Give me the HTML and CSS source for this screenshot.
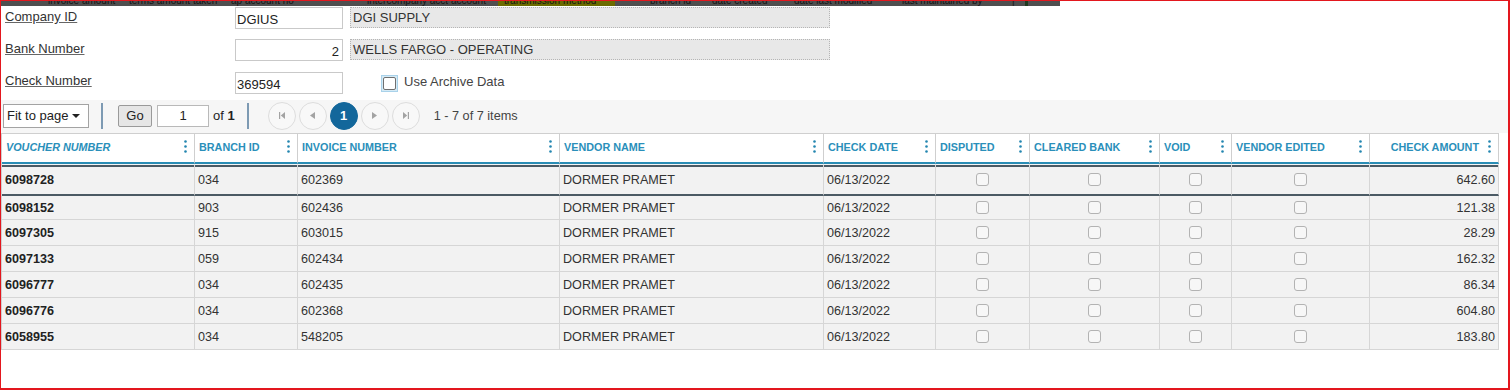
FILE: index.html
```html
<!DOCTYPE html>
<html lang="en">
<head>
<meta charset="utf-8">
<title>Check Inquiry</title>
<link rel="stylesheet" href="styles.css">
</head>
<body>
<div class="frame">
  <div class="band">
    <span class="bt w1">invoice amount</span>
    <span class="bt w2">terms amount taken</span>
    <span class="bt w3">ap account no</span>
    <span class="bt w4">intercompany acct account</span>
    <span class="bt w5 hl">transmission method</span>
    <span class="bt w6">branch id</span>
    <span class="bt w7">date created</span>
    <span class="bt w8">date last modified</span>
    <span class="bt w9">last maintained by</span>
    <span class="bt w10">|</span>
    <span class="bgreen"></span>
  </div>

  <div class="form">
    <div class="frow">
      <span class="flabel">Company ID</span>
      <span class="fin">DGIUS</span>
      <span class="fdesc">DGI SUPPLY</span>
    </div>
    <div class="frow">
      <span class="flabel">Bank Number</span>
      <span class="fin right">2</span>
      <span class="fdesc">WELLS FARGO - OPERATING</span>
    </div>
    <div class="frow third">
      <span class="flabel">Check Number</span>
      <span class="fin">369594</span>
      <span class="acb"><i></i></span>
      <span class="acl">Use Archive Data</span>
    </div>
  </div>

  <div class="pager">
    <span class="sel">Fit to page<span class="caret"></span></span>
    <span class="vsep"></span>
    <span class="go">Go</span>
    <span class="pnum">1</span>
    <span class="of">of <b>1</b></span>
    <span class="vsep vsep2"></span>
    <div class="pbtns">
      <span class="pb"><svg width="6" height="7" viewBox="0 0 6 7"><rect x="0" y="0" width="1.2" height="7" fill="#a3a3a3"/><polygon points="6,0 1.8,3.5 6,7" fill="#a3a3a3"/></svg></span>
      <span class="pb"><svg width="5" height="7" viewBox="0 0 5 7"><polygon points="5,0 0,3.5 5,7" fill="#a3a3a3"/></svg></span>
      <span class="pb cur">1</span>
      <span class="pb"><svg width="5" height="7" viewBox="0 0 5 7"><polygon points="0,0 5,3.5 0,7" fill="#a3a3a3"/></svg></span>
      <span class="pb"><svg width="6" height="7" viewBox="0 0 6 7"><polygon points="0,0 4.2,3.5 0,7" fill="#a3a3a3"/><rect x="4.8" y="0" width="1.2" height="7" fill="#a3a3a3"/></svg></span>
    </div>
    <span class="items">1 - 7 of 7 items</span>
  </div>

  <div class="grid">
    <div class="h sorted"><span>VOUCHER NUMBER</span><svg class="keb" width="3" height="13" viewBox="0 0 3 13"><circle cx="1.5" cy="1.5" r="1.3"/><circle cx="1.5" cy="6.5" r="1.3"/><circle cx="1.5" cy="11.5" r="1.3"/></svg></div>
    <div class="h"><span>BRANCH ID</span><svg class="keb" width="3" height="13" viewBox="0 0 3 13"><circle cx="1.5" cy="1.5" r="1.3"/><circle cx="1.5" cy="6.5" r="1.3"/><circle cx="1.5" cy="11.5" r="1.3"/></svg></div>
    <div class="h"><span>INVOICE NUMBER</span><svg class="keb" width="3" height="13" viewBox="0 0 3 13"><circle cx="1.5" cy="1.5" r="1.3"/><circle cx="1.5" cy="6.5" r="1.3"/><circle cx="1.5" cy="11.5" r="1.3"/></svg></div>
    <div class="h"><span>VENDOR NAME</span><svg class="keb" width="3" height="13" viewBox="0 0 3 13"><circle cx="1.5" cy="1.5" r="1.3"/><circle cx="1.5" cy="6.5" r="1.3"/><circle cx="1.5" cy="11.5" r="1.3"/></svg></div>
    <div class="h"><span>CHECK DATE</span><svg class="keb" width="3" height="13" viewBox="0 0 3 13"><circle cx="1.5" cy="1.5" r="1.3"/><circle cx="1.5" cy="6.5" r="1.3"/><circle cx="1.5" cy="11.5" r="1.3"/></svg></div>
    <div class="h"><span>DISPUTED</span><svg class="keb" width="3" height="13" viewBox="0 0 3 13"><circle cx="1.5" cy="1.5" r="1.3"/><circle cx="1.5" cy="6.5" r="1.3"/><circle cx="1.5" cy="11.5" r="1.3"/></svg></div>
    <div class="h"><span>CLEARED BANK</span><svg class="keb" width="3" height="13" viewBox="0 0 3 13"><circle cx="1.5" cy="1.5" r="1.3"/><circle cx="1.5" cy="6.5" r="1.3"/><circle cx="1.5" cy="11.5" r="1.3"/></svg></div>
    <div class="h"><span>VOID</span><svg class="keb" width="3" height="13" viewBox="0 0 3 13"><circle cx="1.5" cy="1.5" r="1.3"/><circle cx="1.5" cy="6.5" r="1.3"/><circle cx="1.5" cy="11.5" r="1.3"/></svg></div>
    <div class="h"><span>VENDOR EDITED</span><svg class="keb" width="3" height="13" viewBox="0 0 3 13"><circle cx="1.5" cy="1.5" r="1.3"/><circle cx="1.5" cy="6.5" r="1.3"/><circle cx="1.5" cy="11.5" r="1.3"/></svg></div>
    <div class="h num"><span>CHECK AMOUNT</span><svg class="keb" width="3" height="13" viewBox="0 0 3 13"><circle cx="1.5" cy="1.5" r="1.3"/><circle cx="1.5" cy="6.5" r="1.3"/><circle cx="1.5" cy="11.5" r="1.3"/></svg></div>

    <div class="c b r1">6098728</div><div class="c r1">034</div><div class="c r1">602369</div><div class="c r1">DORMER PRAMET</div><div class="c r1">06/13/2022</div><div class="c k r1"><i class="box"></i></div><div class="c k r1"><i class="box"></i></div><div class="c k r1"><i class="box"></i></div><div class="c k r1"><i class="box"></i></div><div class="c n r1">642.60</div>

    <div class="c b r2">6098152</div><div class="c r2">903</div><div class="c r2">602436</div><div class="c r2">DORMER PRAMET</div><div class="c r2">06/13/2022</div><div class="c k r2"><i class="box"></i></div><div class="c k r2"><i class="box"></i></div><div class="c k r2"><i class="box"></i></div><div class="c k r2"><i class="box"></i></div><div class="c n r2">121.38</div>

    <div class="c b">6097305</div><div class="c">915</div><div class="c">603015</div><div class="c">DORMER PRAMET</div><div class="c">06/13/2022</div><div class="c k"><i class="box"></i></div><div class="c k"><i class="box"></i></div><div class="c k"><i class="box"></i></div><div class="c k"><i class="box"></i></div><div class="c n">28.29</div>

    <div class="c b">6097133</div><div class="c">059</div><div class="c">602434</div><div class="c">DORMER PRAMET</div><div class="c">06/13/2022</div><div class="c k"><i class="box"></i></div><div class="c k"><i class="box"></i></div><div class="c k"><i class="box"></i></div><div class="c k"><i class="box"></i></div><div class="c n">162.32</div>

    <div class="c b">6096777</div><div class="c">034</div><div class="c">602435</div><div class="c">DORMER PRAMET</div><div class="c">06/13/2022</div><div class="c k"><i class="box"></i></div><div class="c k"><i class="box"></i></div><div class="c k"><i class="box"></i></div><div class="c k"><i class="box"></i></div><div class="c n">86.34</div>

    <div class="c b">6096776</div><div class="c">034</div><div class="c">602368</div><div class="c">DORMER PRAMET</div><div class="c">06/13/2022</div><div class="c k"><i class="box"></i></div><div class="c k"><i class="box"></i></div><div class="c k"><i class="box"></i></div><div class="c k"><i class="box"></i></div><div class="c n">604.80</div>

    <div class="c b">6058955</div><div class="c">034</div><div class="c">548205</div><div class="c">DORMER PRAMET</div><div class="c">06/13/2022</div><div class="c k"><i class="box"></i></div><div class="c k"><i class="box"></i></div><div class="c k"><i class="box"></i></div><div class="c k"><i class="box"></i></div><div class="c n">183.80</div>
  </div>
</div>
</body>
</html>
```

FILE: styles.css
```css
html, body {
  margin: 0;
  padding: 0;
  background: #fff;
}

body {
  font-family: "Liberation Sans", Arial, sans-serif;
  color: #333;
}

.frame {
  width: 1510px;
  height: 390px;
  box-sizing: border-box;
  border-style: solid;
  border-color: #e3171e;
  border-width: 1px 2px 2px 1px;
  overflow: hidden;
  background: #fff;
}

/* cut-off strip at the very top */
.band {
  display: flex;
  height: 5px;
  width: 1059px;
  overflow: hidden;
  background: #4f4f4f;
  padding-left: 47px;
  box-sizing: border-box;
  font-size: 10px;
  line-height: 12px;
  color: #141414;
}

.bt {
  flex: none;
  margin-top: -6px;
  height: 12px;
  white-space: nowrap;
  overflow: hidden;
}

.w1 { width: 81px; }
.w2 { width: 102px; }
.w3 { width: 136px; }
.w4 { width: 131px; }
.w5 { width: 111px; padding-left: 6px; }
.w6 { width: 62px; margin-left: 35px; }
.w7 { width: 82px; }
.w8 { width: 108px; }
.w9 { width: 110px; }
.w10 { width: 13px; }

.hl {
  background: #6b6b00;
}

.bgreen {
  flex: none;
  width: 3px;
  height: 5px;
  background: #1f3a1f;
}

/* form */
.form {
  display: flex;
  flex-direction: column;
  gap: 10px;
  margin-top: 1px;
}

.frow {
  display: flex;
  align-items: flex-start;
  height: 22px;
}

.frow.third {
  margin-top: 1px;
  align-items: center;
}

.flabel {
  flex: none;
  width: 234px;
  box-sizing: border-box;
  padding-left: 4px;
  font-size: 13px;
  line-height: 20px;
  color: #333;
  text-decoration: underline;
  text-decoration-color: #666;
}

.frow.third .flabel {
  align-self: flex-start;
  line-height: 18px;
}

.fin {
  flex: none;
  width: 108px;
  height: 22px;
  box-sizing: border-box;
  border: 1px solid #c9c9c9;
  background: #fff;
  padding: 3px 3px 0 1px;
  font-size: 13px;
  line-height: 17px;
  color: #222;
  white-space: nowrap;
}

.fin.right {
  text-align: right;
}

.fdesc {
  flex: none;
  margin-left: 7px;
  width: 480px;
  height: 21px;
  box-sizing: border-box;
  border: 1px dotted #b5b5b5;
  background: #e8e8e8;
  padding: 1px 0 0 2px;
  font-size: 13px;
  line-height: 18px;
  color: #333;
  white-space: nowrap;
}

.acb {
  flex: none;
  margin-left: 38px;
  width: 17px;
  height: 17px;
  box-sizing: border-box;
  border: 1px solid #a9d2ea;
  background: #d5eaf5;
  padding: 1px;
}

.acb i {
  display: block;
  width: 13px;
  height: 13px;
  box-sizing: border-box;
  border: 1px solid #6f6f6f;
  border-radius: 2px;
  background: #fff;
}

.acl {
  margin-left: 6px;
  font-size: 13px;
  color: #444;
  line-height: 16px;
  margin-top: -3px;
}

/* pager */
.pager {
  display: flex;
  align-items: center;
  height: 33px;
  margin-top: 6px;
  padding-left: 2px;
  padding-bottom: 2px;
  box-sizing: border-box;
  background: #f6f6f6;
  font-size: 13px;
  color: #333;
}

.sel {
  flex: none;
  display: flex;
  align-items: center;
  width: 86px;
  height: 24px;
  box-sizing: border-box;
  border: 1px solid #a3a3a3;
  background: #fff;
  padding-left: 3px;
  color: #222;
}

.caret {
  margin-left: 4px;
  width: 0;
  height: 0;
  border-left: 4px solid transparent;
  border-right: 4px solid transparent;
  border-top: 4px solid #222;
}

.vsep {
  flex: none;
  width: 2px;
  height: 26px;
  margin-left: 12px;
  background: #7d9ab3;
}

.go {
  flex: none;
  margin-left: 15px;
  width: 34px;
  height: 22px;
  box-sizing: border-box;
  border: 1px solid #9a9a9a;
  border-radius: 2px;
  background: #e6e6e6;
  text-align: center;
  line-height: 20px;
  color: #222;
}

.pnum {
  flex: none;
  margin-left: 5px;
  width: 52px;
  height: 22px;
  box-sizing: border-box;
  border: 1px solid #b9b9b9;
  background: #fff;
  text-align: center;
  line-height: 20px;
  color: #222;
}

.of {
  margin-left: 4px;
  color: #222;
}

.vsep2 {
  margin-left: 12px;
}

.pbtns {
  display: flex;
  gap: 3px;
  margin-left: 19px;
}

.pb {
  display: flex;
  align-items: center;
  justify-content: center;
  width: 28px;
  height: 28px;
  box-sizing: border-box;
  border: 1px solid #dddddd;
  border-radius: 50%;
  background: #f8f8f8;
}

.pb.cur {
  background: #13679b;
  border-color: #13679b;
  color: #fff;
  font-weight: bold;
  font-size: 13px;
}

.items {
  margin-left: 14px;
  font-size: 12.7px;
  color: #444;
}

/* grid */
.grid {
  display: grid;
  grid-template-columns: 193px 103px 262px 264px 112px 94px 130px 72px 138px 129px;
  width: max-content;
  border-top: 1px solid #cfcfcf;
  border-left: 1px solid #cfcfcf;
}

.h {
  display: flex;
  align-items: center;
  justify-content: space-between;
  height: 30px;
  box-sizing: border-box;
  padding: 0 7px 3px 4px;
  border-right: 1px solid #cfcfcf;
  border-bottom: 2px solid #2a8db5;
  background: #fff;
  font-size: 10.8px;
  font-weight: bold;
  color: #2a8fba;
  white-space: nowrap;
}

.h.sorted span {
  font-style: italic;
}

.h.num {
  justify-content: flex-end;
  gap: 9px;
}

.keb {
  flex: none;
  fill: #2386b0;
}

.c {
  display: flex;
  align-items: center;
  height: 26px;
  box-sizing: border-box;
  padding: 0 3px;
  border-right: 1px solid #d6d6d6;
  border-bottom: 1px solid #d6d6d6;
  background: #f2f2f2;
  font-size: 12.6px;
  color: #333;
  white-space: nowrap;
  overflow: hidden;
}

.c.b {
  font-weight: bold;
  color: #222;
}

.c.n {
  justify-content: flex-end;
}

.c.k {
  justify-content: center;
}

.c.r1 {
  height: 32px;
  border-top: 1px solid #f4f4f4;
  border-bottom: 2px solid #4b5a64;
  box-shadow: inset 0 2px 0 #4b5a64;
}

.c.r2 {
  height: 24px;
}

.box {
  display: block;
  width: 13px;
  height: 13px;
  box-sizing: border-box;
  border: 1px solid #b3b3b3;
  border-radius: 3px;
  background: #f7f7f7;
}
```
